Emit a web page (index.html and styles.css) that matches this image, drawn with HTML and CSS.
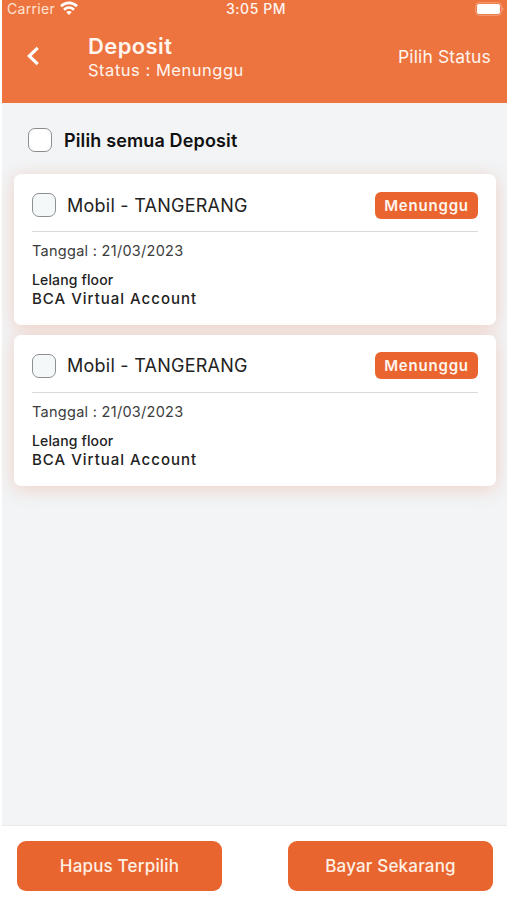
FILE: index.html
```html
<!DOCTYPE html>
<html lang="id">
<head>
<meta charset="utf-8">
<title>Deposit</title>
<link rel="stylesheet" href="styles.css">
</head>
<body>
<div class="screen">
  <header class="header">
    <div class="statusbar">
      <div class="carrier"><span>Carrier</span>
        <svg class="wifi" viewBox="0 0 18 14" width="18" height="14" fill="none" stroke="#fff" stroke-width="2.7"><path d="M1 5.2C5.6 .8 12.4 .8 17 5.2M4 8.7C7 6 11 6 14 8.7"/><path d="M9 14 6.2 11Q9 8.8 11.8 11Z" fill="#fff" stroke="none"/></svg>
      </div>
      <span class="time">3:05 PM</span>
      <svg class="battery" viewBox="0 0 30 14" width="30" height="14"><rect x=".75" y=".75" width="25.5" height="12.5" rx="3.5" fill="none" stroke="#fff" stroke-opacity=".35"/><rect x="2" y="2" width="23" height="10" rx="2" fill="#fff"/><path d="M27.5 5v4q2-2 0-4" fill="#fff" fill-opacity=".45"/></svg>
    </div>
    <div class="nav">
      <svg class="back" viewBox="0 0 12 20" width="12" height="20" fill="none" stroke="#fff" stroke-width="3.2"><path d="M10.7 1.8 2.3 10l8.4 8.2"/></svg>
      <div class="heading"><h1><span>Deposit</span></h1><p><span>Status : Menunggu</span></p></div>
      <span class="filter">Pilih Status</span>
    </div>
  </header>
  <main class="content">
    <label class="select-all"><span class="check check-white"></span><span class="all-text">Pilih semua Deposit</span></label>
    <article class="card">
      <div class="card-top"><span class="check"></span><span class="title">Mobil - TANGERANG</span><span class="badge">Menunggu</span></div>
      <p class="date"><span>Tanggal : 21/03/2023</span></p>
      <p class="kind"><span>Lelang floor</span></p>
      <p class="bank"><span>BCA Virtual Account</span></p>
    </article>
    <article class="card">
      <div class="card-top"><span class="check"></span><span class="title">Mobil - TANGERANG</span><span class="badge">Menunggu</span></div>
      <p class="date"><span>Tanggal : 21/03/2023</span></p>
      <p class="kind"><span>Lelang floor</span></p>
      <p class="bank"><span>BCA Virtual Account</span></p>
    </article>
  </main>
  <footer class="footer">
    <button class="btn remove"><span>Hapus Terpilih</span></button>
    <button class="btn pay"><span>Bayar Sekarang</span></button>
  </footer>
</div>
</body>
</html>
```
FILE: styles.css
```css
* { box-sizing: border-box; }
body { margin: 0; background: #fff; font-family: Inter, "Liberation Sans", sans-serif; color: #222; }
h1, p { margin: 0; }
svg { display: block; flex: none; }
.screen { height: 900px; padding-left: 2px; display: flex; flex-direction: column; overflow: hidden; }
.header { height: 103px; flex: none; background: #ed733f; color: #fff5ee; }
.statusbar { height: 19px; display: grid; grid-template-columns: 1fr auto 1fr; align-items: center; padding: 0 2px 0 5px; line-height: 18px; }
.carrier { display: flex; gap: 5px; align-items: center; font-size: 14px; letter-spacing: .3px; color: #ffe3d2; margin-top: -1px; }
.wifi { margin-top: -2px; }
.time { font-size: 14px; font-weight: 500; letter-spacing: .55px; margin-top: -1px; }
.battery { justify-self: end; margin-top: -2px; }
.nav { display: flex; align-items: center; height: 76px; padding: 0 16px 0 25px; }
.back { margin-right: 49px; margin-top: -3px; }
.heading { flex: 1; margin-top: -1px; }
.heading h1 { font-size: 22px; line-height: 26px; font-weight: 600; letter-spacing: .4px; }
.heading p { font-size: 16.5px; line-height: 22px; letter-spacing: .52px; }
.filter { font-size: 17.5px; letter-spacing: .14px; margin-top: -2px; }
.content { flex: 1; background: #f2f4f6; padding: 25px 11px 0 12px; }
.select-all { display: flex; align-items: center; height: 24px; margin: 0 0 22px 14px; color: #111; }
.check { width: 24px; height: 24px; flex: none; border: 1px solid #8c8e8f; border-radius: 7px; background: #f5f8f8; }
.check-white { background: #fff; }
.all-text { margin-left: 12px; font-size: 18px; font-weight: 600; letter-spacing: .14px; }
.card { height: 151px; margin-bottom: 9.5px; padding: 0 18px; border-radius: 7px; background: #fff; box-shadow: 0 3px 18px rgba(237, 105, 55, .25); }
.card-top { height: 58px; display: flex; align-items: center; border-bottom: 1px solid #d9dadb; padding-top: 5px; }
.title { flex: 1; margin-left: 11px; font-size: 18px; letter-spacing: .25px; }
.badge { width: 103px; height: 27px; border-radius: 6px; background: #e9642f; color: #fff5ee; font-size: 15px; font-weight: 600; line-height: 28px; text-align: center; letter-spacing: .8px; }
.date { margin-top: 9px; font-size: 14.5px; line-height: 20px; letter-spacing: .28px; color: #3c3c3c; }
.kind { margin-top: 10px; font-size: 14px; font-weight: 500; line-height: 18px; letter-spacing: .14px; }
.bank { margin-top: 1px; font-size: 15px; font-weight: 500; line-height: 18px; letter-spacing: 1px; }
.footer { height: 75px; flex: none; display: flex; justify-content: space-between; padding: 15px 14px 0 15px; border-top: 1px solid #e7eaeb; background: #fff; }
.btn { width: 205px; height: 50px; padding: 0; border: 0; border-radius: 9px; background: #e9652f; color: #fff0e5; font: 500 17px Inter, sans-serif; letter-spacing: .18px; }
```
